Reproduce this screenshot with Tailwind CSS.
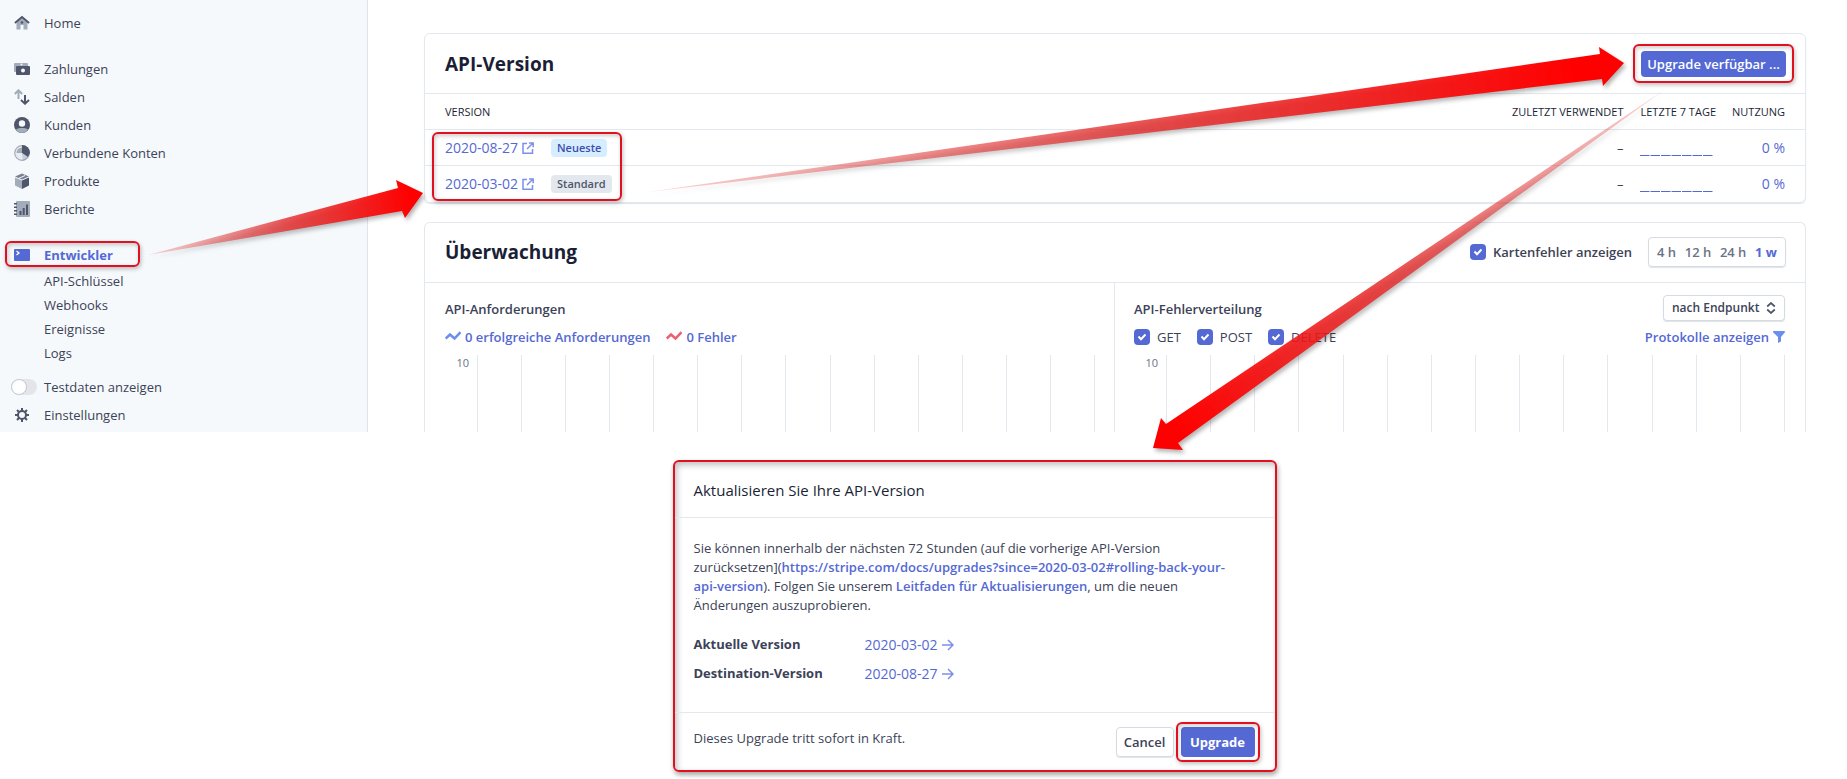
<!doctype html>
<html lang="de">
  <head>
    <meta charset="UTF-8" />
    <meta name="viewport" content="width=device-width, initial-scale=1.0" />
    <title>API-Version</title>
    <script src="https://cdn.jsdelivr.net/npm/@tailwindcss/browser@4"></script>
  </head>
  <body class="relative overflow-x-hidden bg-white font-['Open_Sans','Noto_Sans',sans-serif] text-[14px] leading-5 text-[#3c4257]">
    <div class="flex h-[432px] overflow-hidden">
      <!-- Sidebar -->
      <nav class="w-[368px] shrink-0 border-r border-[#dfe4ec] bg-[#f5f9fc] pt-[9px] text-[13px]">
        <a href="#" class="flex h-7 items-center gap-[14px] pl-[14px]">
          <svg class="size-4" viewBox="0 0 16 16"><path fill="#a3acb9" d="M2.500 7 8 2l5.500 5v7.500h-4V10h-3v4.500h-4z" /><path fill="#4f566b" d="M8 .7 .3 7.300l1.200 1.400L8 3.200l6.500 5.500 1.200-1.400z" /><circle cx="8" cy="7.500" r="1.300" fill="#4f566b" /></svg>
          Home
        </a>

        <div class="pt-[18px]">
          <a href="#" class="flex h-7 items-center gap-[14px] pl-[14px]">
            <svg class="size-4" viewBox="0 0 16 16"><path fill="#a3acb9" d="M1 2h12a1 1 0 0 1 1 1v2H3v6H1a1 1 0 0 1-1-1V3a1 1 0 0 1 1-1z" /><rect x="2" y="5" width="14" height="9" rx="1" fill="#4f566b" /><circle cx="9" cy="9.500" r="2" fill="#f5f9fc" /><circle cx="7.500" cy="3.600" r="1" fill="#f5f9fc" /></svg>
            Zahlungen
          </a>
          <a href="#" class="flex h-7 items-center gap-[14px] pl-[14px]">
            <svg class="size-4" viewBox="0 0 16 16" fill="none" stroke-width="2"><path stroke="#a3acb9" d="M4.500 10V1.500M.8 5l3.700-3.700L8.200 5" /><path stroke="#4f566b" d="M11 6v8.500M7 11l4 3.700 4-3.700" /></svg>
            Salden
          </a>
          <a href="#" class="flex h-7 items-center gap-[14px] pl-[14px]">
            <svg class="size-4" viewBox="0 0 16 16"><circle cx="8" cy="8" r="8" fill="#4f566b" /><path fill="#a3acb9" d="M1.800 13a8 8 0 0 0 12.400 0c-1-1.600-3-2-6.200-2s-5.200.4-6.200 2z" /><circle cx="8" cy="6.500" r="3.200" fill="#f5f9fc" /></svg>
            Kunden
          </a>
          <a href="#" class="flex h-7 items-center gap-[14px] pl-[14px]">
            <svg class="size-4" viewBox="0 0 16 16"><circle cx="8" cy="8" r="7.300" fill="#e8ecf2" stroke="#a3acb9" stroke-width="1.200" /><path fill="#a3acb9" d="M8 8H2.500A5.500 5.500 0 0 1 8 2.500z" /><path fill="#4f566b" d="M8 0a8 8 0 0 1 8 8l-2 4L8 8z" /><path fill="#7a8296" d="M8 8l6 4a8 8 0 0 1-5 4z" opacity=".3" /></svg>
            Verbundene Konten
          </a>
          <a href="#" class="flex h-7 items-center gap-[14px] pl-[14px]">
            <svg class="size-4" viewBox="0 0 16 16"><path fill="#a3acb9" d="m1 4.500 7 3V16l-7-3.500z" /><path fill="#4f566b" d="M15 4.500l-7 3V16l7-3.500z" /><path fill="#7a8296" d="m8 .5 7 3-7 3-7-3z" /><path stroke="#f5f9fc" d="m4.500 5.500 6.500-3" /></svg>
            Produkte
          </a>
          <a href="#" class="flex h-7 items-center gap-[14px] pl-[14px]">
            <svg class="size-4" viewBox="0 0 16 16"><rect x="2" width="14" height="16" rx="1" fill="#a3acb9" /><path fill="#4f566b" d="M0 2h3v1.500H0zM0 5.500h3V7H0zM0 9h3v1.500H0zM0 12.500h3V14H0zM5.500 10h2v4h-2zM8.700 7h2v7h-2zM12 3.500h2V14h-2z" /></svg>
            Berichte
          </a>
        </div>

        <div class="pt-[18px]">
          <div class="relative">
            <a href="#" class="flex h-7 items-center gap-[14px] pl-[14px] font-bold text-[#5469d4]">
              <svg class="size-4" viewBox="0 0 16 16"><rect y="2" width="16" height="12" rx="1" fill="#5469d4" /><path fill="none" stroke="#fff" stroke-width="1.300" d="m2.500 4 2.500 2-2.500 2" /></svg>
              Entwickler
            </a>
            <span class="pointer-events-none absolute top-0 left-[5px] h-[26px] w-[135px] rounded-md border-2 border-[#e01020] shadow-[1px_2px_4px_rgba(0,0,0,0.25),inset_1px_2px_4px_rgba(0,0,0,0.2)]"></span>
          </div>
          <a href="#" class="flex h-6 items-center pl-11">API-Schlüssel</a>
          <a href="#" class="flex h-6 items-center pl-11">Webhooks</a>
          <a href="#" class="flex h-6 items-center pl-11">Ereignisse</a>
          <a href="#" class="flex h-6 items-center pl-11">Logs</a>
        </div>

        <div class="pt-2">
          <label class="flex h-7 items-center gap-[7px] pl-[11px]">
            <span class="grid items-center">
              <input type="checkbox" class="peer col-start-1 row-start-1 h-4 w-[26px] appearance-none rounded-full bg-[#e3e5e9]" />
              <span class="col-start-1 row-start-1 size-4 rounded-full border border-[#c1c9d2] bg-white peer-checked:ml-[10px]"></span>
            </span>
            Testdaten anzeigen
          </label>
          <a href="#" class="flex h-7 items-center gap-[14px] pl-[14px]">
            <svg class="size-4" viewBox="0 0 16 16" fill="none" stroke="#4f566b"><circle cx="8" cy="8" r="4" stroke-width="2" /><path stroke-width="2" d="M8 1v3M8 12v3M1 8h3M12 8h3M3 3l2.200 2.200M10.800 10.800 13 13M13 3l-2.200 2.200M5.200 10.800 3 13" /></svg>
            Einstellungen
          </a>
        </div>
      </nav>

      <!-- Content -->
      <main class="min-w-0 flex-1 pt-[33px] pr-[41px] pl-14">
        <section class="relative rounded-md border border-[#e3e8ee] shadow-[0_1px_1px_rgba(60,66,87,0.15)]">
          <header class="flex h-[59px] items-center justify-between pr-[19px] pl-5">
            <h2 class="text-[19px] font-bold text-[#1a1f36]">API-Version</h2>
            <div class="relative">
              <button type="button" class="h-[26px] w-[145px] rounded bg-[#5469d4] text-[13px] font-semibold whitespace-nowrap text-white">Upgrade verfügbar ...</button>
              <span class="pointer-events-none absolute -inset-x-2 -top-[7px] -bottom-[6px] rounded-md border-2 border-[#e01020] shadow-[1px_2px_4px_rgba(0,0,0,0.25),inset_1px_2px_4px_rgba(0,0,0,0.2)]"></span>
            </div>
          </header>
          <table class="w-full text-[13px]">
            <thead>
              <tr class="h-9 border-t border-[#e3e8ee] text-[11px] text-[#1a1f36]">
                <th class="pl-5 text-left font-normal">VERSION</th>
                <th class="w-32 text-right font-normal">ZULETZT VERWENDET</th>
                <th class="w-[88px] pl-[17px] text-left font-normal whitespace-nowrap">LETZTE 7 TAGE</th>
                <th class="w-[89px] pr-5 text-right font-normal">NUTZUNG</th>
              </tr>
            </thead>
            <tbody>
              <tr class="h-9 border-t border-[#e3e8ee]">
                <td class="pl-5">
                  <div class="flex items-center">
                    <a href="#" class="flex w-[106px] items-center gap-1 text-[14px] text-[#5469d4]">2020-08-27
                      <svg class="size-3" viewBox="0 0 12 12" fill="none" stroke="#7c90ea" stroke-width="1.500"><path d="M5 1.500H1v9.700h9.500V7M7 1h4.200v4.200M11 1 5 7" /></svg>
                    </a>
                    <span class="rounded bg-[#d6ecff] px-[6px] text-[11px] leading-[18px] font-semibold text-[#3d4eac]">Neueste</span>
                  </div>
                </td>
                <td class="text-right">–</td>
                <td class="pt-4 pl-[17px]"><svg class="h-[2px] w-[73px]" viewBox="0 0 73 2"><path stroke="#5469d4" stroke-dasharray="9.500 1" d="M0 .5h73" /></svg></td>
                <td class="pr-5 text-right text-[14px] text-[#5469d4]">0 %</td>
              </tr>
              <tr class="h-9 border-t border-[#e3e8ee]">
                <td class="pl-5">
                  <div class="flex items-center">
                    <a href="#" class="flex w-[106px] items-center gap-1 text-[14px] text-[#5469d4]">2020-03-02
                      <svg class="size-3" viewBox="0 0 12 12" fill="none" stroke="#7c90ea" stroke-width="1.500"><path d="M5 1.500H1v9.700h9.500V7M7 1h4.200v4.200M11 1 5 7" /></svg>
                    </a>
                    <span class="rounded bg-[#e3e8ee] px-[6px] text-[11px] leading-[18px] font-semibold text-[#4f566b]">Standard</span>
                  </div>
                </td>
                <td class="text-right">–</td>
                <td class="pt-4 pl-[17px]"><svg class="h-[2px] w-[73px]" viewBox="0 0 73 2"><path stroke="#5469d4" stroke-dasharray="9.500 1" d="M0 .5h73" /></svg></td>
                <td class="pr-5 text-right text-[14px] text-[#5469d4]">0 %</td>
              </tr>
            </tbody>
          </table>
          <span class="pointer-events-none absolute bottom-px left-[7px] h-[69px] w-[190px] rounded-md border-2 border-[#e01020] shadow-[1px_2px_4px_rgba(0,0,0,0.25),inset_1px_2px_4px_rgba(0,0,0,0.2)]"></span>
        </section>

        <section class="mt-[19px] rounded-t-md border border-b-0 border-[#e3e8ee]">
          <header class="flex h-[60px] items-center border-b border-[#e3e8ee] pr-[19px] pl-5">
            <h2 class="flex-1 text-[19px] font-bold text-[#1a1f36]">Überwachung</h2>
            <label class="mr-4 flex items-center gap-[7px] text-[13px] font-semibold">
              <span class="grid">
                <input type="checkbox" checked class="col-start-1 row-start-1 size-4 appearance-none rounded bg-[#5469d4]" />
                <svg class="pointer-events-none col-start-1 row-start-1 size-4" viewBox="0 0 16 16" fill="none" stroke="#fff" stroke-width="2"><path d="m4.500 7.500 2.500 2.700 4.500-4.700" /></svg>
              </span>
              Kartenfehler anzeigen
            </label>
            <div class="flex h-[30px] w-[138px] items-center justify-between rounded border border-[#d5dbe3] px-2 text-[13px] font-semibold text-[#697386] shadow-[0_1px_1px_rgba(60,66,87,0.15)]">
              <button type="button">4 h</button>
              <button type="button">12 h</button>
              <button type="button">24 h</button>
              <button type="button" class="font-bold text-[#5469d4]">1 w</button>
            </div>
          </header>
          <div class="grid grid-cols-2">
            <div class="border-r border-[#e3e8ee] pr-[19px] pl-5">
              <h3 class="pt-4 text-[13px] font-semibold">API-Anforderungen</h3>
              <div class="mt-2 flex h-5 items-center gap-4 text-[13px] font-semibold text-[#5469d4]">
                <a href="#" class="flex items-center gap-1"><svg class="h-3 w-4" viewBox="0 0 16 12" fill="none" stroke="#6c8eef" stroke-width="2.500"><path d="m.7 7.500 4.300-4 4.500 4 6-6.300" /></svg>0 erfolgreiche Anforderungen</a>
                <a href="#" class="flex items-center gap-1"><svg class="h-3 w-4" viewBox="0 0 16 12" fill="none" stroke="#ed5f74" stroke-width="2.500"><path d="m.7 7.500 4.300-4 4.500 4 6-6.300" /></svg>0 Fehler</a>
              </div>
              <div class="mt-2 flex h-20">
                <span class="w-8 pr-2 text-right text-[11px] leading-4 text-[#697386]">10</span>
                <div class="chart flex flex-1 justify-between"></div>
              </div>
            </div>
            <div class="pr-5 pl-[19px]">
              <div class="flex items-start justify-between">
                <h3 class="pt-4 text-[13px] font-semibold">API-Fehlerverteilung</h3>
                <div class="relative mt-3">
                  <select aria-label="Gruppierung" class="h-[26px] w-[122px] appearance-none rounded border border-[#d5dbe3] bg-white pl-2 text-[12px] font-semibold shadow-[0_1px_1px_rgba(60,66,87,0.15)]">
                    <option>nach Endpunkt</option>
                  </select>
                  <svg class="pointer-events-none absolute top-[7px] right-[9px] h-3 w-[10px]" viewBox="0 0 10 12" fill="none" stroke="#4f566b" stroke-width="1.700"><path d="M1.200 4.500 5 1l3.800 3.500M1.200 7.500 5 11l3.800-3.500" /></svg>
                </div>
              </div>
              <div class="mt-[6px] flex h-5 items-center text-[13px] font-medium">
                <label class="mr-4 flex items-center gap-[7px]">
                  <span class="grid">
                    <input type="checkbox" checked class="col-start-1 row-start-1 size-4 appearance-none rounded bg-[#5469d4]" />
                    <svg class="pointer-events-none col-start-1 row-start-1 size-4" viewBox="0 0 16 16" fill="none" stroke="#fff" stroke-width="2"><path d="m4.500 7.500 2.500 2.700 4.500-4.700" /></svg>
                  </span>
                  GET
                </label>
                <label class="mr-4 flex items-center gap-[7px]">
                  <span class="grid">
                    <input type="checkbox" checked class="col-start-1 row-start-1 size-4 appearance-none rounded bg-[#5469d4]" />
                    <svg class="pointer-events-none col-start-1 row-start-1 size-4" viewBox="0 0 16 16" fill="none" stroke="#fff" stroke-width="2"><path d="m4.500 7.500 2.500 2.700 4.500-4.700" /></svg>
                  </span>
                  POST
                </label>
                <label class="flex items-center gap-[7px]">
                  <span class="grid">
                    <input type="checkbox" checked class="col-start-1 row-start-1 size-4 appearance-none rounded bg-[#5469d4]" />
                    <svg class="pointer-events-none col-start-1 row-start-1 size-4" viewBox="0 0 16 16" fill="none" stroke="#fff" stroke-width="2"><path d="m4.500 7.500 2.500 2.700 4.500-4.700" /></svg>
                  </span>
                  DELETE
                </label>
                <a href="#" class="ml-auto flex items-center gap-1 font-semibold text-[#5469d4]">Protokolle anzeigen
                  <svg class="size-3" viewBox="0 0 12 12"><path fill="#6c8eef" d="M1 0h10a.8.800 0 0 1 .7 1.400L8 6v4.500L5 12V6L.3 1.400A.8.800 0 0 1 1 0z" /></svg>
                </a>
              </div>
              <div class="mt-2 flex h-20">
                <span class="w-8 pr-2 text-right text-[11px] leading-4 text-[#697386]">10</span>
                <div class="chart flex flex-1 justify-between"></div>
              </div>
            </div>
          </div>
        </section>
      </main>
    </div>

    <!-- Upgrade dialog -->
    <div class="flex justify-center pt-7 pb-[6px] pl-[102px]">
      <section role="dialog" aria-labelledby="dialogTitle" class="w-[604px] rounded-md border-2 border-[#e01020] shadow-[1px_3px_5px_rgba(0,0,0,0.35),inset_2px_3px_6px_rgba(0,0,0,0.25)]">
        <h2 id="dialogTitle" class="flex h-14 items-center border-b border-[#e3e8ee] px-[19px] text-[15px] font-medium text-[#1a1f36]">Aktualisieren Sie Ihre API-Version</h2>
        <div class="h-[194px] px-[19px] pt-[21px] text-[13px]">
          <p class="leading-[19px]">
            Sie können innerhalb der nächsten 72 Stunden (auf die vorherige API-Version<br />
            zurücksetzen](<a href="#" class="font-semibold text-[#5469d4]">https://stripe.com/docs/upgrades?since=2020-03-02#rolling-back-your-<br />api-version</a>). Folgen Sie unserem <a href="#" class="font-semibold text-[#5469d4]">Leitfaden für Aktualisierungen</a>, um die neuen<br />
            Änderungen auszuprobieren.
          </p>
          <dl class="mt-[15px] grid grid-cols-[171px_1fr] leading-[29px]">
            <dt class="font-bold">Aktuelle Version</dt>
            <dd>
              <a href="#" class="flex items-center gap-1 text-[14px] text-[#5469d4]">2020-03-02
                <svg class="size-3" viewBox="0 0 12 12" fill="none" stroke="#7c90ea" stroke-width="1.500"><path d="M0 6h11M6 1l5 5-5 5" /></svg>
              </a>
            </dd>
            <dt class="font-bold">Destination-Version</dt>
            <dd>
              <a href="#" class="flex items-center gap-1 text-[14px] text-[#5469d4]">2020-08-27
                <svg class="size-3" viewBox="0 0 12 12" fill="none" stroke="#7c90ea" stroke-width="1.500"><path d="M0 6h11M6 1l5 5-5 5" /></svg>
              </a>
            </dd>
          </dl>
        </div>
        <footer class="flex h-[58px] items-start border-t border-[#e3e8ee] pr-5 pl-[19px] text-[13px]">
          <p class="flex-1 pt-[15px]">Dieses Upgrade tritt sofort in Kraft.</p>
          <button type="button" class="mt-[14px] mr-[7px] h-[30px] w-[58px] rounded border border-[#d5dbe3] font-semibold shadow-[0_1px_1px_rgba(60,66,87,0.15)]">Cancel</button>
          <div class="relative mt-[14px]">
            <button type="button" class="h-[30px] w-[74px] rounded bg-[#5469d4] font-bold text-white">Upgrade</button>
            <span class="pointer-events-none absolute -inset-[5px] rounded-md border-2 border-[#e01020] shadow-[1px_2px_4px_rgba(0,0,0,0.25),inset_1px_2px_4px_rgba(0,0,0,0.2)]"></span>
          </div>
        </footer>
      </section>
    </div>

    <!-- Arrows between the steps -->
    <svg class="pointer-events-none absolute top-0 left-0 h-[779px] w-[1847px] max-w-none drop-shadow-[2px_3px_2px_rgba(0,0,0,0.3)]" viewBox="0 0 1847 779">
      <defs>
        <linearGradient id="a1" gradientUnits="userSpaceOnUse" x1="152" y1="254" x2="423" y2="193">
          <stop offset="0" stop-color="#e03030" stop-opacity=".2" /><stop offset=".5" stop-color="#e62c2c" stop-opacity=".8" /><stop offset=".95" stop-color="#f00" />
        </linearGradient>
        <linearGradient id="a2" gradientUnits="userSpaceOnUse" x1="648" y1="192" x2="1624" y2="63">
          <stop offset="0" stop-color="#e03030" stop-opacity=".2" /><stop offset=".5" stop-color="#e62c2c" stop-opacity=".8" /><stop offset=".95" stop-color="#f00" />
        </linearGradient>
        <linearGradient id="a3" gradientUnits="userSpaceOnUse" x1="1662" y1="92" x2="1153" y2="448">
          <stop offset="0" stop-color="#e03030" stop-opacity=".2" /><stop offset=".5" stop-color="#e62c2c" stop-opacity=".8" /><stop offset=".95" stop-color="#f00" />
        </linearGradient>
      </defs>
      <path fill="url(#a1)" d="M148 255 398 188 396 180 423 193 405 218 402 211z" />
      <path fill="url(#a2)" d="M648 192 1600 54 1599 47 1624 63 1603 86 1602 79z" />
      <path fill="url(#a3)" d="M1664 90 1166 424 1161 418 1153 448 1183 450 1178 443z" />
    </svg>

    <script>
      // One vertical grid line per half day, 14 intervals
      document.querySelectorAll(".chart").forEach(chart => {
        for (let i = 0; i < 15; i++) {
          chart.insertAdjacentHTML("beforeend", '<i class="w-px bg-[#e3e8ee]"></i>');
        }
      });
    </script>
  </body>
</html>
